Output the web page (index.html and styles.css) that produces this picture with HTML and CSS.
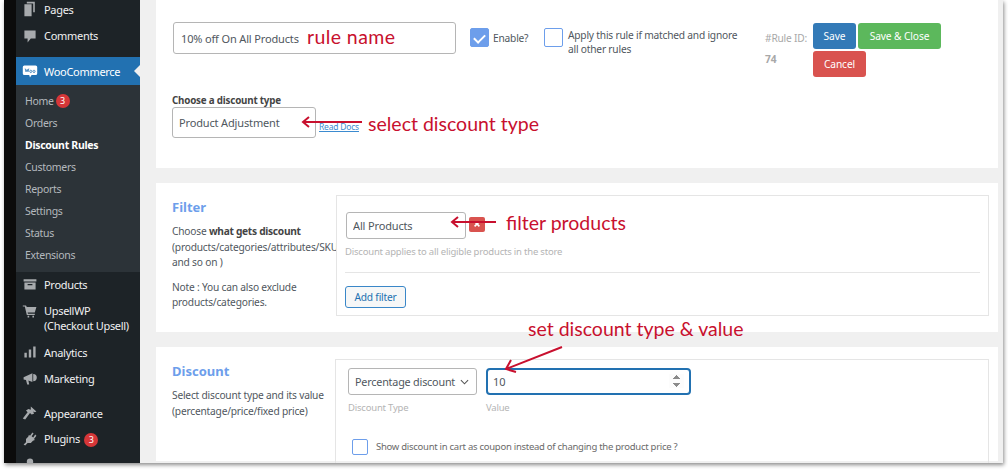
FILE: index.html
```html
<!DOCTYPE html>
<html lang="en">

<head>
  <meta charset="UTF-8" />
  <meta name="viewport" content="width=device-width, initial-scale=1.0" />
  <title>Discount Rules</title>
  <link rel="stylesheet" href="styles.css">
</head>

<body>
  <div class="window">
    <div class="edge"></div>

    <!-- Admin menu -->
    <nav class="sidebar">
      <ul class="menu menu-top">
        <li class="menu-item">
          <svg class="icon" viewBox="0 0 20 20"><path d="M6 1h10v13h-2V3H6zM3 4h9v15H3z" /></svg>
          <span>Pages</span>
        </li>
        <li class="menu-item">
          <svg class="icon" viewBox="0 0 20 20"><path d="M3 3h14v10h-6l-4 5v-5H3z" /></svg>
          <span>Comments</span>
        </li>
      </ul>

      <div class="menu-current">
        <svg class="icon woo" viewBox="0 0 20 20">
          <path class="woo-bg" d="M3 3h14a2 2 0 0 1 2 2v8a2 2 0 0 1-2 2h-5l-2 3-1-3H3a2 2 0 0 1-2-2V5a2 2 0 0 1 2-2z" />
          <path class="woo-mark" d="M4 7l1 4 1.500-3 1 3 1-4M11 9a1.300 1.500 0 1 0 .01 0M15 9a1.300 1.500 0 1 0 .01 0" />
        </svg>
        <span>WooCommerce</span>
      </div>

      <ul class="submenu">
        <li>Home <b class="badge">3</b></li>
        <li>Orders</li>
        <li class="active">Discount Rules</li>
        <li>Customers</li>
        <li>Reports</li>
        <li>Settings</li>
        <li>Status</li>
        <li>Extensions</li>
      </ul>

      <ul class="menu menu-lower">
        <li class="menu-item">
          <svg class="icon" viewBox="0 0 20 20"><path d="M2 4h16v3H2zM3 8h14v9H3zM7 10v1.500h6V10z" fill-rule="evenodd" /></svg>
          <span>Products</span>
        </li>
        <li class="menu-item menu-tall">
          <svg class="icon" viewBox="0 0 20 20"><path d="M1 3h4l1 2h12l-2 7H7l.5 1.500H16V15H6L3.500 4.500H1zM7 16h2v2H7zM13 16h2v2h-2z" /></svg>
          <span>UpsellWP<br>(Checkout Upsell)</span>
        </li>
        <li class="menu-item">
          <svg class="icon" viewBox="0 0 20 20"><path d="M3 11h3v6H3zM8.500 7h3v10h-3zM14 3h3v14h-3z" /></svg>
          <span>Analytics</span>
        </li>
        <li class="menu-item">
          <svg class="icon" viewBox="0 0 20 20"><path d="M2 9l11-5v11l-5-2 1 5H6.500L5 12.500 2 12zM14 5a4.500 4.500 0 0 1 0 9z" /></svg>
          <span>Marketing</span>
        </li>
        <li class="menu-item menu-gap">
          <svg class="icon" viewBox="0 0 20 20"><path d="M11 2l7 6-2 1-2-1 1 3-3 1-2-2-6 8-3-1 6-8-2-2 3-2 3 1z" /></svg>
          <span>Appearance</span>
        </li>
        <li class="menu-item">
          <svg class="icon" viewBox="0 0 20 20"><path d="M13 2l1.500 1-2.500 3.500 2 1.500 2.500-3.500L18 6l-3 4 1 1-1 1-1 0-3 3-4 0-3 3-2-1 3-3 0-4 3-3 0-1 1-1 1 1z" /></svg>
          <span>Plugins <b class="badge badge-plugins">3</b></span>
        </li>
        <li class="menu-item">
          <svg class="icon" viewBox="0 0 20 20"><path d="M10 2a4 4 0 1 1 0 8 4 4 0 0 1 0-8zM3 18c0-5 3-7 7-7s7 2 7 7z" /></svg>
        </li>
      </ul>
    </nav>

    <main class="content">
      <!-- Rule name and actions -->
      <section class="card card-rule">
        <div class="rule-row">
          <input class="field rule-name" type="text" value="10% off On All Products" />
          <label class="check-label enable">
            <input class="check" type="checkbox" checked />
            <span>Enable?</span>
          </label>
          <label class="check-label exclusive">
            <input class="check" type="checkbox" />
            <span>Apply this rule if matched and ignore all other rules</span>
          </label>
          <div class="rule-id">
            <span>#Rule ID:</span>
            <b>74</b>
          </div>
          <div class="actions">
            <button class="btn btn-save">Save</button>
            <button class="btn btn-close">Save &amp; Close</button>
            <button class="btn btn-cancel">Cancel</button>
          </div>
        </div>

        <div class="type-block">
          <label class="type-label">Choose a discount type</label>
          <div class="type-row">
            <select class="field type-select">
              <option>Product Adjustment</option>
            </select>
            <a class="docs" href="#">Read Docs</a>
          </div>
        </div>
      </section>

      <!-- Filter -->
      <section class="card card-split card-filter">
        <div class="intro">
          <h3>Filter</h3>
          <p>Choose <b>what gets discount</b><br>(products/categories/attributes/SKUs<br>and so on )</p>
          <p>Note : You can also exclude<br>products/categories.</p>
        </div>
        <div class="panel">
          <div class="filter-row">
            <select class="field filter-select">
              <option>All Products</option>
            </select>
            <button class="remove">
              <svg viewBox="0 0 10 10"><path d="M2 2l6 6M8 2L2 8" /></svg>
            </button>
          </div>
          <p class="hint">Discount applies to all eligible products in the store</p>
          <hr class="divider" />
          <button class="add-filter">Add filter</button>
        </div>
      </section>

      <!-- Discount -->
      <section class="card card-split card-discount">
        <div class="intro">
          <h3>Discount</h3>
          <p>Select discount type and its value<br>(percentage/price/fixed price)</p>
        </div>
        <div class="panel">
          <div class="value-row">
            <div class="value-col">
              <select class="field percent-select">
                <option>Percentage discount</option>
              </select>
              <span class="hint">Discount Type</span>
            </div>
            <div class="value-col">
              <input class="field value-input" type="number" value="10" />
              <span class="hint">Value</span>
            </div>
          </div>
          <label class="check-label coupon">
            <input class="check" type="checkbox" />
            <span>Show discount in cart as coupon instead of changing the product price ?</span>
          </label>
        </div>
      </section>
    </main>
  </div>

  <!-- Annotations drawn over the screenshot -->
  <span class="note note-name">rule name</span>
  <span class="note note-type">select discount type</span>
  <span class="note note-filter">filter products</span>
  <span class="note note-value">set discount type &amp; value</span>

  <svg class="arrows" viewBox="0 0 1008 471">
    <path d="M362 122H303M309 117l-6 5 6 5" />
    <path d="M496 222H452M458 217l-6 5 6 5" />
    <path d="M562 347L506 369M516 372l-10-3 5-9" />
  </svg>
</body>

</html>
```

FILE: styles.css
```css
* {
  margin: 0;
  padding: 0;
  box-sizing: border-box;
  font-family: "Noto Sans", "Open Sans", sans-serif;
}

body {
  background-color: #fff;
  height: 471px;
  overflow: hidden;
  padding-left: 4px;
}

ul {
  list-style: none;
}

.window {
  display: flex;
  width: 999px;
  height: 463px;
  overflow: hidden;
  background: #f0f0f0;
  box-shadow: 1px 2px 4px rgba(0, 0, 0, 0.45);
}

.edge {
  width: 12px;
  flex-shrink: 0;
  background: #0b0b0b;
}

/* Admin menu */
.sidebar {
  width: 124px;
  flex-shrink: 0;
  background: #1d2327;
  color: #f0f0f1;
  font-size: 11px;
  letter-spacing: -0.3px;
}

.menu-item {
  display: flex;
  align-items: center;
  gap: 6px;
  height: 26px;
  padding-left: 6px;
  line-height: 15px;
}

.menu-top {
  margin-top: -4px;
  height: 61px;
}

.menu-top .menu-item {
  margin-bottom: 0.5px;
}

.icon {
  width: 16px;
  height: 16px;
  flex-shrink: 0;
  fill: #a7aaad;
}

.menu-current {
  display: flex;
  align-items: center;
  gap: 6px;
  position: relative;
  height: 28px;
  padding-left: 6px;
  background: #2271b1;
  color: #fff;
}

.menu-current::after {
  content: "";
  position: absolute;
  right: 0;
  top: 8px;
  border: 6px solid transparent;
  border-right-color: #f0f0f0;
  border-left-width: 0;
}

.woo .woo-bg {
  fill: #fff;
}

.woo .woo-mark {
  fill: none;
  stroke: #2271b1;
  stroke-width: 1;
}

.submenu {
  height: 187px;
  padding-top: 5px;
  background: #2c3338;
  color: #b4b9be;
  font-size: 10.5px;
  letter-spacing: -0.3px;
}

.submenu li {
  display: flex;
  align-items: center;
  gap: 2px;
  height: 22px;
  padding-left: 9px;
}

.submenu .active {
  color: #fff;
  font-weight: 700;
}

.badge {
  display: inline-block;
  width: 14px;
  height: 14px;
  border-radius: 50%;
  background: #d63638;
  color: #fff;
  font-size: 9px;
  font-weight: 400;
  letter-spacing: 0;
  line-height: 14px;
  text-align: center;
}

.badge-plugins {
  margin-left: 2px;
}

.menu-lower {
  margin-top: -1px;
}

.menu-tall {
  align-items: flex-start;
  height: 42px;
  padding-top: 6px;
}

.menu-gap {
  margin-top: 9px;
}

/* Content */
.content {
  flex: 1;
  display: flex;
  flex-direction: column;
  gap: 15px;
  padding: 0 5px 0 16px;
  color: #50575e;
  font-size: 10.2px;
  letter-spacing: -0.2px;
}

.card {
  flex-shrink: 0;
  background: #fff;
}

.card-rule {
  height: 168px;
  padding: 22px 0 0 17px;
}

.rule-row {
  display: flex;
  align-items: flex-start;
}

.field {
  display: block;
  border: 1px solid #b5b5b5;
  border-radius: 3px;
  background: #fff;
  color: #50575e;
  font-size: 11px;
  letter-spacing: -0.15px;
  outline: none;
}

.rule-name {
  width: 283px;
  height: 32px;
  padding: 0 7px;
  border-width: 1.500px;
}

.check-label {
  display: flex;
  line-height: 14px;
}

.check {
  appearance: none;
  position: relative;
  display: block;
  width: 19px;
  height: 19px;
  flex-shrink: 0;
  border: 1.500px solid #6d9eeb;
  border-radius: 2px;
  background: #fff;
}

.check:checked {
  background: #6d9eeb;
}

.check:checked::before {
  content: "";
  position: absolute;
  left: 5px;
  top: 3px;
  width: 5px;
  height: 9px;
  border: solid #fff;
  border-width: 0 2px 2px 0;
  transform: rotate(45deg);
}

.enable {
  align-items: center;
  gap: 4px;
  width: 59px;
  margin: 6px 0 0 14px;
}

.exclusive {
  gap: 5px;
  width: 196px;
  margin: 6px 0 0 15px;
}

.rule-id {
  display: flex;
  flex-direction: column;
  gap: 7px;
  width: 48px;
  margin: 9px 0 0 25px;
  color: #a8a8a8;
  line-height: 14px;
  white-space: nowrap;
}

.actions {
  display: flex;
  flex-wrap: wrap;
  gap: 2px;
  width: 130px;
  margin-top: 1px;
}

.btn {
  height: 26px;
  border: 1px solid transparent;
  border-radius: 3px;
  color: #fff;
  font-size: 10.2px;
  letter-spacing: -0.1px;
}

.btn-save {
  width: 43px;
  background: #337ab7;
}

.btn-close {
  width: 83px;
  background: #5cb85c;
}

.btn-cancel {
  width: 53px;
  background: #d9534f;
}

.type-block {
  margin: 17px 0 0 -1px;
}

.type-label {
  display: block;
  color: #444;
  font-size: 9.800px;
  font-weight: 700;
  line-height: 13px;
}

.type-row {
  display: flex;
  align-items: flex-end;
  gap: 3px;
}

.type-select {
  appearance: none;
  width: 144px;
  height: 31px;
  padding-left: 6px;
}

.docs {
  margin-bottom: 6px;
  color: #3b8bd0;
  font-size: 8.500px;
}

.card-split {
  display: flex;
  padding: 12px 9px 0 16px;
}

.card-filter {
  height: 149px;
}

.card-discount {
  height: 114px;
}

.intro {
  width: 164px;
  flex-shrink: 0;
  overflow: hidden;
  white-space: nowrap;
  line-height: 15.500px;
}

.card-discount .intro {
  width: 163px;
}

.intro h3 {
  margin: 5px 0 9px;
  color: #6d9eeb;
  font-size: 13px;
  letter-spacing: 0;
  line-height: 15px;
}

.intro p {
  margin-bottom: 9px;
}

.intro b {
  color: #444;
  letter-spacing: -0.3px;
}

.panel {
  flex: 1;
  height: 121px;
  padding: 15px 8px 0 8px;
  border: 1px solid #e5e5e5;
}

.filter-row {
  display: flex;
  align-items: center;
  gap: 3px;
  margin: 1px 0 0 1px;
}

.filter-select {
  appearance: none;
  width: 120px;
  height: 27px;
  padding-left: 6px;
}

.remove {
  display: flex;
  align-items: center;
  justify-content: center;
  width: 16px;
  height: 15px;
  margin-top: -3px;
  border: none;
  border-radius: 2px;
  background: #d9534f;
}

.remove svg {
  width: 8px;
  height: 8px;
  fill: none;
  stroke: #fff;
  stroke-width: 2;
}

.hint {
  color: #b4b4b4;
  font-size: 9.500px;
  letter-spacing: -0.2px;
}

.card-filter .hint {
  margin-top: 6px;
  line-height: 13px;
}

.divider {
  height: 1px;
  margin: 14px 0 13px;
  border: none;
  background: #e5e5e5;
}

.add-filter {
  width: 61px;
  height: 22px;
  border: 1px solid #3a87c8;
  border-radius: 3px;
  background: #f6f7f7;
  color: #2271b1;
  font-size: 10.2px;
  letter-spacing: -0.2px;
}

.card-discount .panel {
  padding: 8px 8px 0 12px;
}

.value-row {
  display: flex;
  gap: 9px;
}

.value-col {
  display: flex;
  flex-direction: column;
  gap: 6px;
}

.percent-select {
  appearance: none;
  width: 129px;
  height: 27px;
  padding-left: 6px;
  font-size: 10.8px;
  letter-spacing: -0.2px;
  background: #fff url("data:image/svg+xml,%3Csvg xmlns='http://www.w3.org/2000/svg' viewBox='0 0 10 6'%3E%3Cpath d='M1 1l4 4 4-4' fill='none' stroke='%23555' stroke-width='1.200'/%3E%3C/svg%3E") no-repeat right 7px center / 9px 6px;
}

.value-input {
  width: 205px;
  height: 27px;
  padding: 0 5px;
  border: 2px solid #2271b1;
  border-radius: 4px;
}

.value-input::-webkit-inner-spin-button {
  opacity: 1;
}

.coupon {
  align-items: center;
  gap: 8px;
  margin: 25px 0 0 4px;
  color: #6a6a6a;
  font-size: 9.500px;
  letter-spacing: -0.27px;
}

.coupon .check {
  width: 16px;
  height: 16px;
}

/* Annotations */
.note {
  position: absolute;
  color: #c8102e;
  font-family: "Lato", sans-serif;
  font-size: 19.500px;
  line-height: 24px;
  white-space: nowrap;
}

.note-name {
  left: 307px;
  top: 25px;
  letter-spacing: 0.4px;
}

.note-type {
  left: 368px;
  top: 112px;
}

.note-filter {
  left: 506px;
  top: 211px;
}

.note-value {
  left: 528px;
  top: 317px;
}

.arrows {
  position: absolute;
  left: 0;
  top: 0;
  width: 1008px;
  height: 471px;
  fill: none;
  stroke: #c8102e;
  stroke-width: 2;
  pointer-events: none;
}
```
